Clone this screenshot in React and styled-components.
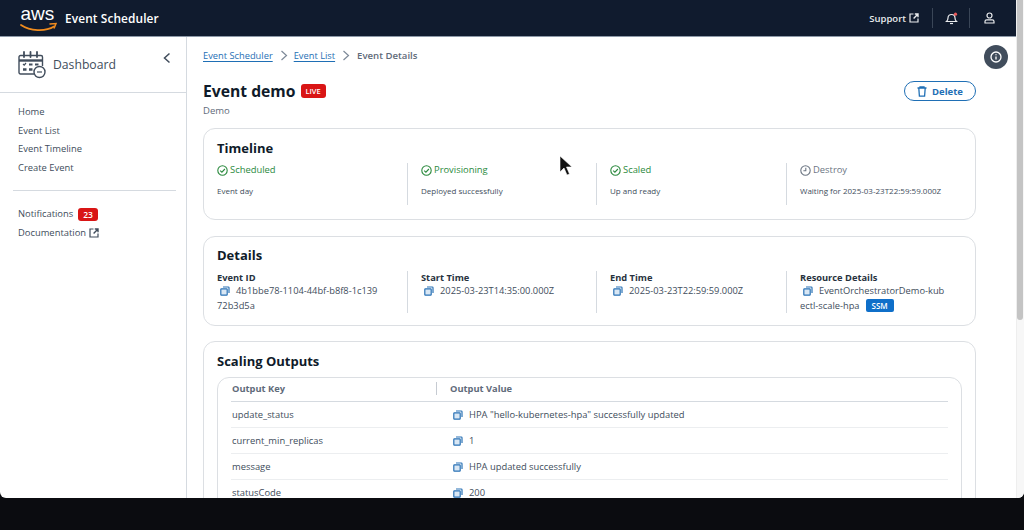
import React from 'react'
import styled, { createGlobalStyle } from 'styled-components'

const GlobalStyle = createGlobalStyle`
  html, body {
    margin: 0;
    padding: 0;
    height: 530px;
    overflow: hidden;
    background: #0b0c10;
    font-family: "Open Sans", "Liberation Sans", sans-serif;
    color: #414d5c;
  }
`

const Frame = styled.div`
  position: relative;
  width: 1024px;
  height: 498px;
  overflow: hidden;
  background: #fff;
  border-radius: 0 0 6px 6px;
`

const Header = styled.header`
  width: 1016px;
  height: 37px;
  background: #101b2e;
  border-bottom: 1px solid #8d99a8;
  box-sizing: border-box;
  display: flex;
  align-items: center;
  color: #fff;
`

const Brand = styled.div`
  font-size: 11.9px;
  font-weight: 600;
  margin-left: 7px;
  letter-spacing: 0.1px;
`

const HeaderRight = styled.div`
  margin-left: auto;
  height: 37px;
  display: flex;
  align-items: center;
  font-size: 9.5px;
  font-weight: 600;
  color: #e9ebed;
`

const HeaderDivider = styled.span`
  width: 1px;
  height: 20px;
  background: #3a4657;
`

const HeaderIcon = styled.span`
  display: flex;
  align-items: center;
  justify-content: center;
  width: ${(p) => p.$w}px;
`

const SupportLink = styled.span`
  display: flex;
  align-items: center;
  gap: 3px;
  margin-right: 13px;
`

const Body = styled.div`
  display: flex;
  height: 461px;
`

const Sidebar = styled.aside`
  width: 187px;
  flex: none;
  border-right: 1px solid #d5dae0;
  box-sizing: border-box;
`

const SideHead = styled.div`
  height: 56px;
  box-sizing: border-box;
  border-bottom: 1px solid #d5dae0;
  display: flex;
  align-items: center;
  position: relative;
  padding-left: 18px;
  font-size: 12.2px;
  color: #414d5c;
  gap: 7px;
`

const Collapse = styled.span`
  position: absolute;
  left: 161px;
  top: 14px;
  display: flex;
`

const NavList = styled.nav`
  padding: 10px 0 0 18px;
  font-size: 9.4px;
  line-height: 18.7px;
`

const NavItem = styled.div`
  display: flex;
  align-items: center;
  gap: 3px;
`

const NavDivider = styled.div`
  margin: 12px 10px 14px -5px;
  height: 1px;
  background: #d5dae0;
`

const CountBadge = styled.span`
  background: #d91515;
  color: #fff;
  font-size: 8.5px;
  font-weight: 600;
  line-height: 13px;
  padding: 0 5px;
  border-radius: 3px;
  margin-left: 2px;
`

const Main = styled.main`
  position: relative;
  flex: 1;
  padding: 0 48px 0 16px;
  overflow: hidden;
`

const Crumbs = styled.div`
  display: flex;
  align-items: center;
  height: 36px;
  font-size: 9.3px;
`

const Crumb = styled.a`
  color: #1f6fb5;
  text-decoration: underline;
  text-underline-offset: 2px;
  text-decoration-thickness: 1px;
`

const CrumbCurrent = styled.span`
  font-weight: 600;
  font-size: 9.6px;
  margin-left: 1px;
  color: #5f6b7a;
`

const CrumbSep = styled.span`
  display: flex;
  margin: 0 6px 0 7px;
`

const TitleRow = styled.div`
  display: flex;
  align-items: center;
  margin-top: 7px;
  height: 22px;
  position: relative;
`

const Title = styled.h1`
  margin: 0;
  font-size: 15.7px;
  line-height: 22px;
  font-weight: 700;
  color: #0f1b2a;
`

const LiveBadge = styled.span`
  background: #d91515;
  color: #fff;
  font-size: 7.5px;
  font-weight: 600;
  line-height: 14px;
  padding: 0 5px;
  border-radius: 3px;
  margin-left: 5px;
`

const DeleteButton = styled.button`
  position: absolute;
  left: 701px;
  top: 1px;
  width: 72px;
  height: 20px;
  box-sizing: border-box;
  border: 1.5px solid #1f6fb5;
  border-radius: 10px;
  background: #fff;
  color: #1f6fb5;
  font-family: inherit;
  font-size: 9.5px;
  font-weight: 700;
  display: flex;
  align-items: center;
  justify-content: center;
  gap: 5px;
  padding: 0;
`

const Subtitle = styled.div`
  font-size: 9.5px;
  line-height: 14px;
  margin-top: 2px;
  color: #5f6b7a;
`

const Card = styled.section`
  box-sizing: border-box;
  width: 773px;
  height: ${(p) => p.$h}px;
  margin-top: ${(p) => p.$top}px;
  border: 1px solid #dcdfe3;
  border-radius: 12px;
  padding: ${(p) => p.$pad ?? 10}px 13px 0;
`

const CardTitle = styled.h2`
  margin: 0;
  font-size: 13px;
  line-height: 18px;
  font-weight: 700;
  color: #0f1b2a;
`

const Columns = styled.div`
  display: grid;
  grid-template-columns: 190px 189px 190px 1fr;
  margin-top: ${(p) => p.$top}px;
  height: ${(p) => p.$h}px;
`

const Column = styled.div`
  box-sizing: border-box;
  padding-left: ${(p) => (p.$first ? 0 : 13)}px;
  padding-right: ${(p) => (p.$first ? 27 : 16)}px;
  border-left: ${(p) => (p.$first ? 'none' : '1px solid #d5dae0')};
`

const Status = styled.div`
  display: flex;
  align-items: center;
  gap: 2px;
  font-size: 9.4px;
  line-height: 14px;
  color: ${(p) => (p.$pending ? '#6c7683' : '#2b8a3e')};
`

const StatusNote = styled.div`
  font-size: 8px;
  line-height: 12px;
  margin-top: 8px;
  color: #414d5c;
  white-space: nowrap;
`

const FieldLabel = styled.div`
  font-size: 9.3px;
  line-height: 13px;
  font-weight: 700;
  color: #28323e;
`

const FieldValue = styled.div`
  font-size: 9.3px;
  line-height: 14.5px;
  color: #414d5c;
  word-break: break-all;
`

const CopyWrap = styled.span`
  display: inline-block;
  vertical-align: -2px;
  margin: 0 6px 0 3px;
`

const SsmBadge = styled.span`
  display: inline-block;
  background: #0f6fc9;
  color: #fff;
  font-size: 8px;
  font-weight: 600;
  line-height: 13px;
  padding: 0 6px;
  border-radius: 2px;
  margin-left: 6px;
`

const TableCard = styled.div`
  box-sizing: border-box;
  height: 140px;
  margin-top: 7px;
  border: 1px solid #dcdfe3;
  border-radius: 12px;
  padding: 0 13px;
`

const Row = styled.div`
  display: grid;
  box-sizing: border-box;
  grid-template-columns: 218px 1fr;
  height: 26px;
  align-items: center;
  font-size: 9.4px;
  line-height: 12px;
  color: #414d5c;
  border-bottom: 1px solid #eceef0;
`

const HeadRow = styled(Row)`
  height: 24px;
  padding-bottom: 2px;
  font-size: 9.3px;
  border-bottom: 1px solid #d5dae0;
  font-weight: 700;
  color: #5f6b7a;
`

const HeadKey = styled.div`
  padding-left: 1px;
  border-right: 1px solid #c6cbd2;
  height: 13px;
  line-height: 13px;
  margin-right: 12px;
`

const HeadValue = styled.div`
  margin-left: 1px;
`

const RowKey = styled.div`
  padding-left: 1px;
`

const RowValue = styled.div`
  display: flex;
  align-items: center;
  padding-left: 1px;
`

const InfoFab = styled.div`
  position: absolute;
  left: 797px;
  top: 8px;
  width: 24px;
  height: 24px;
  border-radius: 50%;
  background: #414d5c;
  display: flex;
  align-items: center;
  justify-content: center;
`

const Scrollbar = styled.div`
  position: absolute;
  right: 0;
  top: 0;
  bottom: 0;
  width: 8px;
  background: #f7f7f7;
  border-left: 1px solid #eeeeee;
  box-sizing: border-box;
`

const ScrollThumb = styled.div`
  width: 6px;
  height: 320px;
  background: #c4c4c4;
  border-radius: 0 0 3px 3px;
`

const Cursor = styled.svg`
  position: absolute;
  left: 559px;
  top: 155px;
`

const Copy = () => (
  <CopyWrap>
    <svg width="10" height="10" viewBox="0 0 10 10" fill="none" stroke="#2a72b5" strokeWidth="1.2" style={{ display: 'block' }}>
      <rect x="0.8" y="2.8" width="6.4" height="6.4" rx="0.6" fill="#d9e7f4" />
      <path d="M3 1h5.2a.8.8 0 0 1 .8.8V7" />
    </svg>
  </CopyWrap>
)

const Check = () => (
  <svg width="11" height="11" viewBox="0 0 11 11" fill="none" stroke="#2b8a3e" strokeWidth="1.1">
    <circle cx="5.5" cy="5.5" r="4.7" />
    <path d="M3.2 5.6l1.7 1.6 3-3.2" />
  </svg>
)

const Clock = () => (
  <svg width="11" height="11" viewBox="0 0 11 11" fill="none" stroke="#6c7683" strokeWidth="1.1">
    <circle cx="5.5" cy="5.5" r="4.7" />
    <path d="M5.8 2.8v3H3.4" />
  </svg>
)

const External = ({ color = '#414d5c', size = 10 }) => (
  <svg width={size} height={size} viewBox="0 0 10 10" fill="none" stroke={color} strokeWidth="1.2">
    <path d="M4.5 1H1v8h8V5.5" />
    <path d="M5.8 1H9v3.2M9 1L4.6 5.4" strokeWidth="1.4" />
  </svg>
)

const AwsLogo = () => (
  <svg width="38" height="32" viewBox="0 0 38 32" style={{ marginLeft: 20 }}>
    <text x="0.500" y="18" fontFamily="'Liberation Sans', sans-serif" fontSize="19" fill="#fff">aws</text>
    <path d="M1 23c9 6 24 7 33 1.500" fill="none" stroke="#f08c1e" strokeWidth="1.800" strokeLinecap="round" />
    <path d="M30 22l6-.5-1.800 4.500" fill="none" stroke="#f08c1e" strokeWidth="1.500" strokeLinecap="round" />
  </svg>
)

const CalendarIcon = () => (
  <svg width="28" height="28" viewBox="0 0 28 28" fill="none" stroke="#414d5c" strokeWidth="1.400">
    <path d="M16 23H2.500a1.500 1.500 0 0 1-1.500-1.500V6a1.500 1.500 0 0 1 1.500-1.500H23A1.500 1.500 0 0 1 24.500 6v9" />
    <path d="M1 9.500h23.500" strokeWidth="2.400" />
    <path d="M6 1v5M12.500 1v5M19 1v5" strokeWidth="1.800" strokeLinecap="round" />
    <path d="M5 13l1.200 1.200L8 12" strokeWidth="1.200" />
    <path d="M11 13.500h3.500M17 13.500h3.500" strokeWidth="2" />
    <path d="M5 18.500h3.500M11 18.500h3.500" strokeWidth="2.400" />
    <circle cx="21.500" cy="21" r="5.500" fill="#fff" />
    <path d="M19 21h5" strokeWidth="1.200" />
  </svg>
)

const outputs = [
  ['update_status', 'HPA "hello-kubernetes-hpa" successfully updated'],
  ['current_min_replicas', '1'],
  ['message', 'HPA updated successfully'],
  ['statusCode', '200'],
]

const timeline = [
  { name: 'Scheduled', note: 'Event day' },
  { name: 'Provisioning', note: 'Deployed successfully' },
  { name: 'Scaled', note: 'Up and ready' },
  { name: 'Destroy', note: 'Waiting for 2025-03-23T22:59:59.000Z', pending: true },
]

export default function App() {
  return (
    <>
      <GlobalStyle />
      <Frame>
        <Header>
          <AwsLogo />
          <Brand>Event Scheduler</Brand>
          <HeaderRight>
            <SupportLink>
              Support
              <External color="#e9ebed" />
            </SupportLink>
            <HeaderDivider />
            <HeaderIcon $w={36}>
              <svg width="13" height="13" viewBox="0 0 13 13" fill="none" stroke="#e9ebed" strokeWidth="1.200">
                <path d="M1.500 9.500c1.300-1 1.500-2 1.500-3.500a3.500 3.500 0 0 1 7 0c0 1.500.2 2.500 1.500 3.500z" />
                <path d="M5 11.500h3" />
                <circle cx="10.500" cy="2.200" r="1.600" fill="#ee5a5a" stroke="none" />
              </svg>
            </HeaderIcon>
            <HeaderDivider />
            <HeaderIcon $w={38}>
              <svg width="11" height="12" viewBox="0 0 11 12" fill="none" stroke="#e9ebed" strokeWidth="1.200">
                <circle cx="5.500" cy="3.500" r="2.500" />
                <path d="M1 11V9.500c0-1 .8-1.700 1.800-1.700h5.400c1 0 1.800.7 1.800 1.700V11z" />
              </svg>
            </HeaderIcon>
            <HeaderIcon $w={8} />
          </HeaderRight>
        </Header>
        <Body>
          <Sidebar>
            <SideHead>
              <CalendarIcon />
              Dashboard
              <Collapse>
                <svg width="12" height="14" viewBox="0 0 12 14" fill="none" stroke="#414d5c" strokeWidth="1.500">
                  <path d="M8.500 2.500L3.500 7l5 4.500" />
                </svg>
              </Collapse>
            </SideHead>
            <NavList>
              <NavItem>Home</NavItem>
              <NavItem>Event List</NavItem>
              <NavItem>Event Timeline</NavItem>
              <NavItem>Create Event</NavItem>
              <NavDivider />
              <NavItem>
                Notifications <CountBadge>23</CountBadge>
              </NavItem>
              <NavItem>
                Documentation <External />
              </NavItem>
            </NavList>
          </Sidebar>
          <Main>
            <Crumbs>
              <Crumb>Event Scheduler</Crumb>
              <CrumbSep>
                <svg width="8" height="11" viewBox="0 0 8 11" fill="none" stroke="#7d8998" strokeWidth="1.200">
                  <path d="M1.500 1l5 4.500-5 4.500" />
                </svg>
              </CrumbSep>
              <Crumb>Event List</Crumb>
              <CrumbSep>
                <svg width="8" height="11" viewBox="0 0 8 11" fill="none" stroke="#7d8998" strokeWidth="1.200">
                  <path d="M1.500 1l5 4.500-5 4.500" />
                </svg>
              </CrumbSep>
              <CrumbCurrent>Event Details</CrumbCurrent>
            </Crumbs>
            <TitleRow>
              <Title>Event demo</Title>
              <LiveBadge>LIVE</LiveBadge>
              <DeleteButton>
                <svg width="10" height="11" viewBox="0 0 10 11" fill="none" stroke="#1f6fb5" strokeWidth="1.300">
                  <path d="M.5 2h9M3 2V.8h4V2M1.800 2l.6 8.200h5.200L8.200 2" />
                </svg>
                Delete
              </DeleteButton>
            </TitleRow>
            <Subtitle>Demo</Subtitle>
            <Card $h={92} $top={10}>
              <CardTitle>Timeline</CardTitle>
              <Columns $top={6} $h={42}>
                {timeline.map((t, i) => (
                  <Column key={t.name} $first={i === 0}>
                    <Status $pending={t.pending}>
                      {t.pending ? <Clock /> : <Check />}
                      {t.name}
                    </Status>
                    <StatusNote>{t.note}</StatusNote>
                  </Column>
                ))}
              </Columns>
            </Card>
            <Card $h={90} $top={16} $pad={9}>
              <CardTitle>Details</CardTitle>
              <Columns $top={7} $h={41}>
                <Column $first>
                  <FieldLabel>Event ID</FieldLabel>
                  <FieldValue>
                    <Copy />4b1bbe78-1104-44bf-b8f8-1c13972b3d5a
                  </FieldValue>
                </Column>
                <Column>
                  <FieldLabel>Start Time</FieldLabel>
                  <FieldValue>
                    <Copy />2025-03-23T14:35:00.000Z
                  </FieldValue>
                </Column>
                <Column>
                  <FieldLabel>End Time</FieldLabel>
                  <FieldValue>
                    <Copy />2025-03-23T22:59:59.000Z
                  </FieldValue>
                </Column>
                <Column>
                  <FieldLabel>Resource Details</FieldLabel>
                  <FieldValue>
                    <Copy />EventOrchestratorDemo-kubectl-scale-hpa
                    <SsmBadge>SSM</SsmBadge>
                  </FieldValue>
                </Column>
              </Columns>
            </Card>
            <Card $h={170} $top={15}>
              <CardTitle>Scaling Outputs</CardTitle>
              <TableCard>
                <HeadRow>
                  <HeadKey>Output Key</HeadKey>
                  <HeadValue>Output Value</HeadValue>
                </HeadRow>
                {outputs.map(([key, value]) => (
                  <Row key={key}>
                    <RowKey>{key}</RowKey>
                    <RowValue>
                      <Copy />
                      {value}
                    </RowValue>
                  </Row>
                ))}
              </TableCard>
            </Card>
            <InfoFab>
              <svg width="12" height="12" viewBox="0 0 12 12" fill="none" stroke="#fff" strokeWidth="1.300">
                <circle cx="6" cy="6" r="5" />
                <path d="M6 5.500v3M6 3.200v1" />
              </svg>
            </InfoFab>
          </Main>
        </Body>
        <Scrollbar>
          <ScrollThumb />
        </Scrollbar>
        <Cursor width="14" height="22" viewBox="0 0 14 22">
          <path d="M1 1v16l4-4 3 7 2.500-1-3-7H13z" fill="#111" stroke="#fff" strokeWidth="0.600" />
        </Cursor>
      </Frame>
    </>
  )
}
